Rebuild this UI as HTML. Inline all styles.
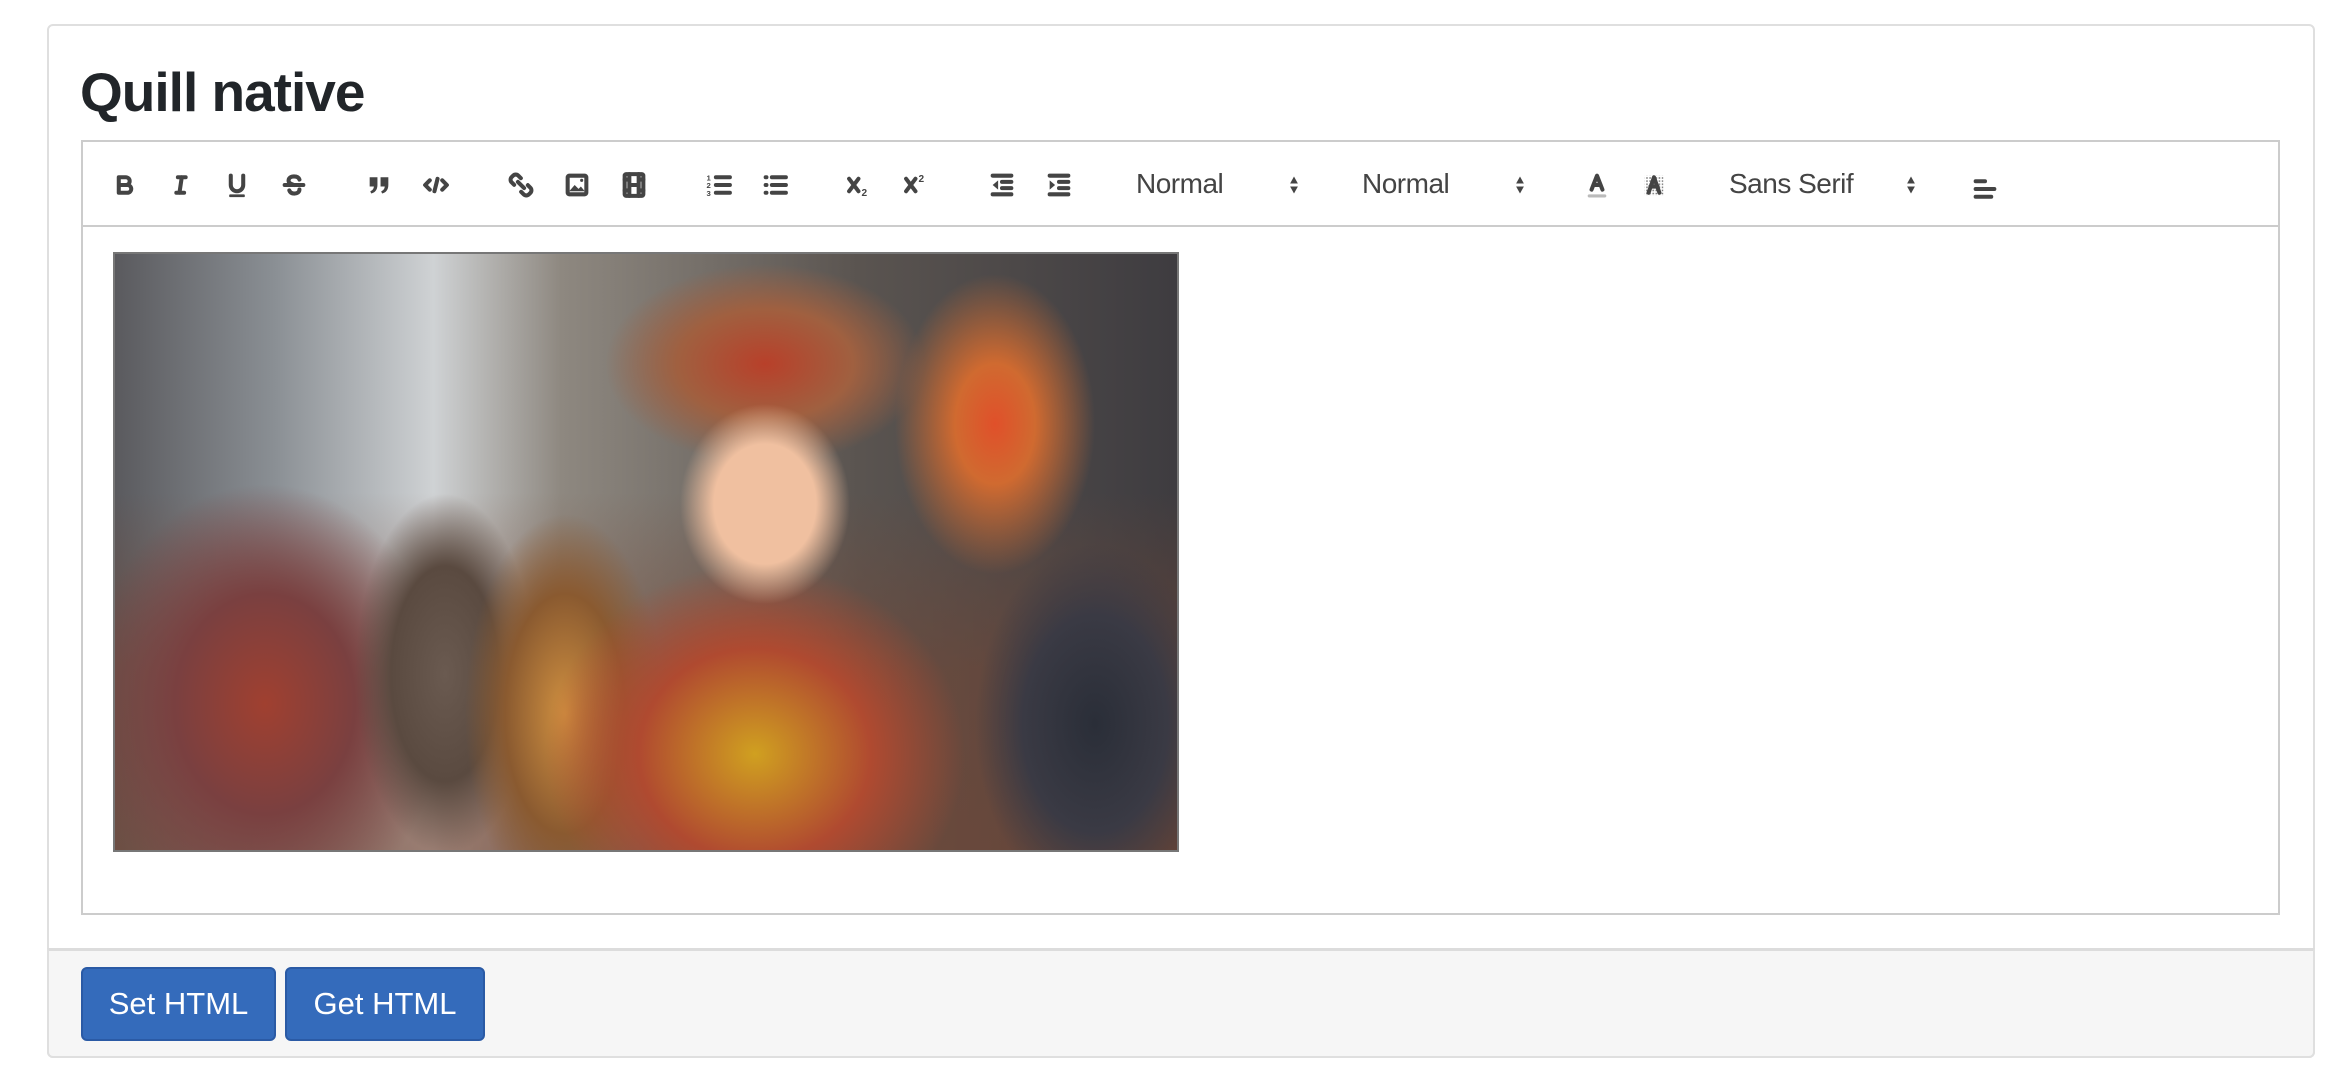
<!DOCTYPE html>
<html><head><meta charset="utf-8"><style>
body{margin:0;width:2342px;height:1072px;background:#fff;font-family:"Liberation Sans",Arial,sans-serif;position:relative;overflow:hidden}
.card{position:absolute;left:47px;top:24px;width:2268px;height:1034px;border:2px solid #dfdfdf;border-radius:6px;box-sizing:border-box;background:#fff}
.foot{position:absolute;left:47px;top:948px;width:2268px;height:110px;background:#f6f6f6;border:2px solid #dfdfdf;border-top:3px solid #dcdcdc;border-radius:0 0 6px 6px;box-sizing:border-box}
h3{position:absolute;left:80px;top:60px;margin:0;font-size:55px;font-weight:bold;color:#212529;letter-spacing:-1px}
.tb{position:absolute;left:81px;top:140px;width:2199px;height:87px;border:2px solid #ccc;box-sizing:border-box}
.ed{position:absolute;left:81px;top:225px;width:2199px;height:690px;border:2px solid #ccc;border-top:none;box-sizing:border-box}
.ic{position:absolute;top:171px;width:28px;height:28px}
.ic svg{width:28px;height:28px}
.st{fill:none;stroke:#444;stroke-width:2.6;stroke-linecap:round;stroke-linejoin:round}
.fl{fill:#444}
.lbl{position:absolute;top:168px;font-size:28px;color:#444;letter-spacing:-0.5px}
.img{position:absolute;left:113px;top:252px;width:1066px;height:600px;border:2px solid #777;box-sizing:border-box;overflow:hidden;
background:
radial-gradient(ellipse 85px 100px at 650px 250px,#f0c0a0 60%,transparent 100%),
radial-gradient(ellipse 160px 100px at 650px 110px,#b8402a 0%,#a06040 55%,transparent 100%),
radial-gradient(ellipse 100px 150px at 880px 170px,#e0502a 0%,#d06a30 40%,transparent 100%),
radial-gradient(ellipse 210px 190px at 640px 500px,#d0a020 0%,#b04a30 55%,transparent 100%),
radial-gradient(ellipse 100px 200px at 450px 460px,#d09040 0%,#8a5a30 60%,transparent 100%),
radial-gradient(ellipse 90px 180px at 330px 420px,#6a5a50 0%,#5a4a40 60%,transparent 100%),
radial-gradient(ellipse 180px 220px at 150px 450px,#a04030 0%,#7a4040 50%,transparent 100%),
radial-gradient(ellipse 120px 180px at 980px 470px,#2a2e38 0%,#3a3a44 60%,transparent 100%),
linear-gradient(180deg,transparent 0%,transparent 40%,rgba(120,70,50,.5) 70%,rgba(120,70,50,.6) 100%),
linear-gradient(90deg,#5a5a5e 0%,#8a8f94 15%,#cfd2d4 30%,#8e8880 42%,#5a5450 70%,#3e3c40 100%)}
.btn{position:absolute;top:967px;height:74px;background:#346bbb;border:2px solid #2a5aa5;border-radius:6px;box-sizing:border-box;color:#fff;font-size:31px;line-height:70px;text-align:center}
</style></head><body>
<div class="card"></div>
<div class="foot"></div>
<h3>Quill native</h3>
<div class="tb"></div>
<div class="ed"></div>

<div class="ic" style="left:111px"><svg viewBox="0 0 18 18"><path class="st" d="M5 4h4.5a2.5 2.5 0 0 1 0 5H5z M5 9h5.5a2.5 2.5 0 0 1 0 5H5z"/></svg></div>
<div class="ic" style="left:167px"><svg viewBox="0 0 18 18"><path class="st" d="M7 4h5M6 14h5M9.5 4l-1.5 10"/></svg></div>
<div class="ic" style="left:223px"><svg viewBox="0 0 18 18"><path class="st" d="M5 3v6a4 4 0 0 0 8 0V3"/><rect class="fl" x="4" y="15" width="10" height="1.8" rx=".5"/></svg></div>
<div class="ic" style="left:280px"><svg viewBox="0 0 18 18"><path class="st" d="M12.5 5.5C12 4 10.5 3.5 9 3.5 7 3.5 5.5 4.5 5.5 6.2 5.5 8 7.5 8.5 9 9M6 12.5c.5 1.5 1.8 2 3.2 2 2 0 3.3-1 3.3-2.6"/><path class="st" d="M3 9h12"/></svg></div>
<div class="ic" style="left:365px"><svg viewBox="0 0 18 18"><path class="fl" d="M3 4h5v5c0 3.5-2 5-4 5.5l-.6-1.4C5 12.4 5.6 11.3 5.7 10H3z M10 4h5v5c0 3.5-2 5-4 5.5l-.6-1.4C12 12.4 12.6 11.3 12.7 10H10z"/></svg></div>
<div class="ic" style="left:422px"><svg viewBox="0 0 18 18"><path class="st" d="M5 6L2 9l3 3M13 6l3 3-3 3M10 5l-2 8"/></svg></div>
<div class="ic" style="left:507px"><svg viewBox="0 0 18 18"><path class="st" d="M7 7l4 4"/><path class="st" d="M8.9 4.6L7.3 3a2.4 2.4 0 0 0-3.4 0l-.9.9a2.4 2.4 0 0 0 0 3.4l1.6 1.6M9.1 13.4l1.6 1.6a2.4 2.4 0 0 0 3.4 0l.9-.9a2.4 2.4 0 0 0 0-3.4l-1.6-1.6"/></svg></div>
<div class="ic" style="left:563px"><svg viewBox="0 0 18 18"><rect class="st" x="3" y="3" width="12" height="12" rx="1"/><path class="fl" d="M4 13l3.5-4 2.5 2.5 1.5-1.5L14 13z"/><circle class="fl" cx="12" cy="6" r="1"/></svg></div>
<div class="ic" style="left:620px"><svg viewBox="0 0 18 18"><rect class="st" x="3" y="2" width="12" height="14" rx="1"/><path class="st" d="M6 2v14M12 2v14M6 9h6M3 5.5h3M3 12.5h3M12 5.5h3M12 12.5h3"/></svg></div>
<div class="ic" style="left:705px"><svg viewBox="0 0 18 18"><path class="st" d="M7 4h9M7 9h9M7 14h9"/><text x="1" y="6" font-size="5" fill="#444" font-weight="bold" font-family="Liberation Sans">1</text><text x="1" y="11" font-size="5" fill="#444" font-weight="bold" font-family="Liberation Sans">2</text><text x="1" y="16" font-size="5" fill="#444" font-weight="bold" font-family="Liberation Sans">3</text></svg></div>
<div class="ic" style="left:761px"><svg viewBox="0 0 18 18"><path class="st" d="M7 4h9M7 9h9M7 14h9M3 4h.5M3 9h.5M3 14h.5"/></svg></div>
<div class="ic" style="left:846px"><svg viewBox="0 0 18 18"><path class="st" d="M2 5l6 8M8 5l-6 8"/><text x="10" y="16" font-size="6.5" font-weight="bold" fill="#444" font-family="Liberation Sans">2</text></svg></div>
<div class="ic" style="left:903px"><svg viewBox="0 0 18 18"><path class="st" d="M2 5l6 8M8 5l-6 8"/><text x="10" y="7" font-size="6.5" font-weight="bold" fill="#444" font-family="Liberation Sans">2</text></svg></div>
<div class="ic" style="left:988px"><svg viewBox="0 0 18 18"><path class="st" d="M3 3h12M9 7h6M9 11h6M3 15h12"/><path class="fl" d="M6.5 6v6L3 9z"/></svg></div>
<div class="ic" style="left:1045px"><svg viewBox="0 0 18 18"><path class="st" d="M3 3h12M9 7h6M9 11h6M3 15h12"/><path class="fl" d="M3 6v6L6.5 9z"/></svg></div>

<div class="lbl" style="left:1136px">Normal</div>
<div class="ic" style="left:1280px"><svg viewBox="0 0 18 18"><path class="fl" d="M6.5 8L9 3.5 11.5 8zM6.5 10L9 14.5 11.5 10z"/></svg></div>
<div class="lbl" style="left:1362px">Normal</div>
<div class="ic" style="left:1506px"><svg viewBox="0 0 18 18"><path class="fl" d="M6.5 8L9 3.5 11.5 8zM6.5 10L9 14.5 11.5 10z"/></svg></div>
<div class="ic" style="left:1583px"><svg viewBox="0 0 18 18"><path class="st" d="M5.5 12L9 3l3.5 9M6.7 9h4.6"/><rect x="3" y="15" width="12" height="2" rx="1" fill="#bbb"/></svg></div>
<div class="ic" style="left:1640px"><svg viewBox="0 0 18 18"><defs><pattern id="p" width="2" height="2" patternUnits="userSpaceOnUse"><rect width="1" height="1" fill="#444"/></pattern></defs><rect x="3" y="3" width="12" height="13" fill="url(#p)" opacity=".7"/><path class="st" d="M5.5 14L9 4l3.5 10M6.7 10h4.6"/></svg></div>
<div class="lbl" style="left:1729px">Sans Serif</div>
<div class="ic" style="left:1897px"><svg viewBox="0 0 18 18"><path class="fl" d="M6.5 8L9 3.5 11.5 8zM6.5 10L9 14.5 11.5 10z"/></svg></div>
<div class="ic" style="left:1971px;top:175px"><svg viewBox="0 0 18 18"><path class="st" d="M3 4h6M3 9h12M3 14h10"/></svg></div>

<div class="img"></div>

<div class="btn" style="left:81px;width:195px">Set HTML</div>
<div class="btn" style="left:285px;width:200px">Get HTML</div>
</body></html>
